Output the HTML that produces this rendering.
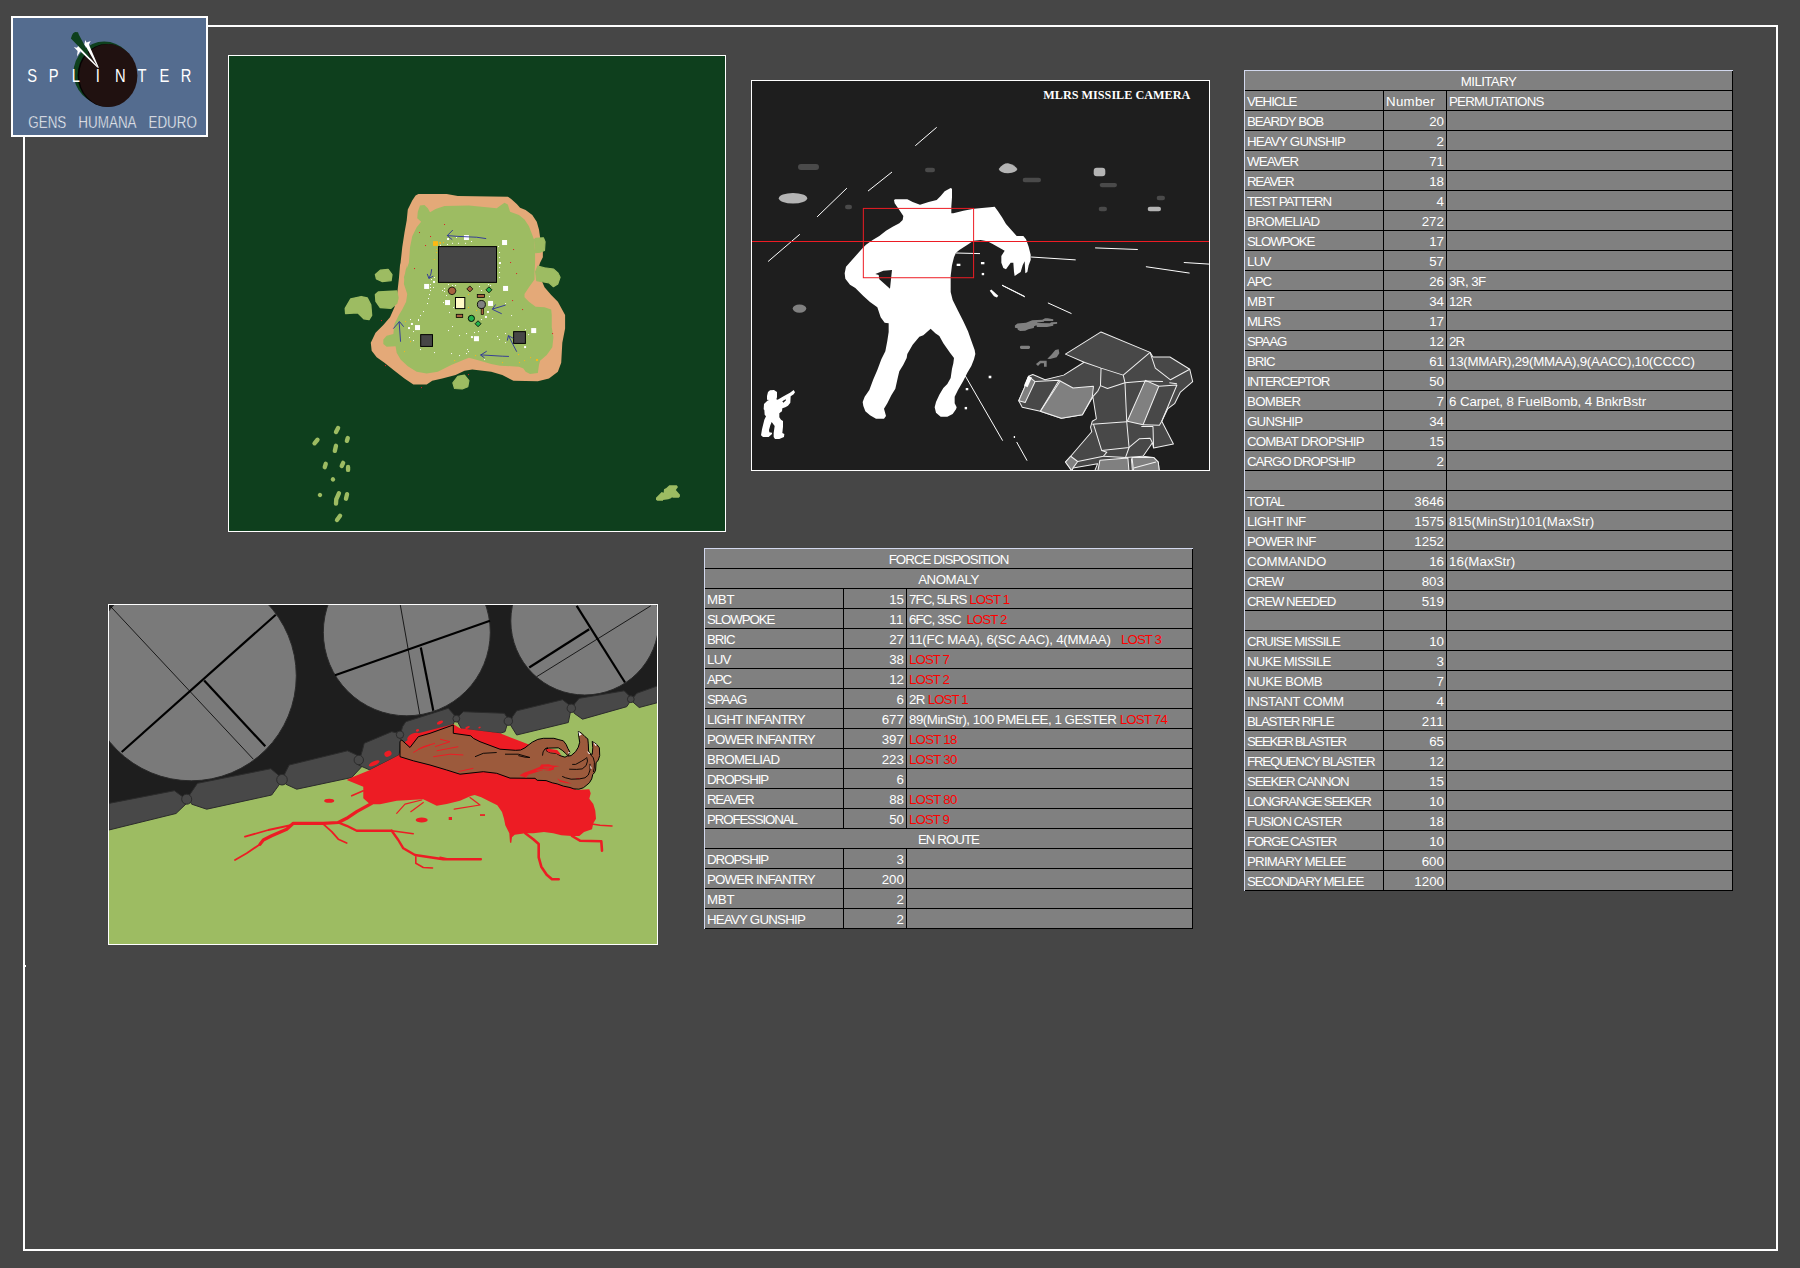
<!DOCTYPE html>
<html lang="en">
<head>
<meta charset="utf-8">
<title>SPLINTER - GENS HUMANA EDURO</title>
<style>
html,body{margin:0;padding:0;}
body{width:1800px;height:1268px;background:#464646;position:relative;overflow:hidden;font-family:"Liberation Sans",sans-serif;}
.abs{position:absolute;}
.frame{position:absolute;left:23px;top:25px;width:1751px;height:1222px;border:2px solid #fff;}
.tbl{position:absolute;width:488px;background:#808080;border-left:1px solid #d2d8ee;border-top:1px solid #d2d8ee;color:#fff;font-size:13.3px;line-height:21px;}
.tbl .r{height:19px;border-bottom:1px solid #000;display:flex;white-space:pre;overflow:hidden;}
.tbl .c1{width:136px;padding-left:2px;border-right:1px solid #000;overflow:hidden;}
.tbl .c2{width:60px;padding-right:2px;border-right:1px solid #000;text-align:right;overflow:hidden;}
.tbl .c2.l{text-align:left;padding-left:2px;padding-right:0;width:60px;}
.tbl .c3{width:283px;padding-left:2px;border-right:1px solid #000;overflow:hidden;}
.tbl .m{width:487px;border-right:1px solid #000;text-align:center;}
.tbl span.t{display:inline-block;position:relative;top:1px;}
.red{color:#ff0000;}
svg{position:absolute;display:block;}
</style>
</head>
<body>
<div class="frame"></div>
<div class="abs tick" style="left:25px;top:965px;width:1px;height:2px;background:#fff"></div>
<svg style="left:0;top:0" width="220" height="150" viewBox="0 0 220 150">
<rect x="12" y="17" width="195" height="119" fill="#546c8f" stroke="#fff" stroke-width="2"/>
<ellipse cx="104.2" cy="72.8" rx="30.7" ry="31.3" fill="#0e401d"/>
<ellipse cx="106.6" cy="75.4" rx="29" ry="31.4" fill="#050303"/>
<ellipse cx="108.3" cy="75.6" rx="29.1" ry="31.5" fill="#201110"/>
<polygon fill="#fff" points="78.4,45.8 81,48.2 90.5,58.4 98.9,67.8 97.3,67.6 80.3,51.3 77,56.6 77.6,51 73.8,47.1 76.9,47.7"/>
<polygon fill="#fff" points="85.3,40 86.6,42.6 90.7,41.1 88.9,44.6 98.9,67.8 97.6,67 86.3,47.2 84.2,45.1"/>
<polygon fill="#0e401d" points="70.9,38.4 72,35.3 73.1,33.3 75.1,32.1 78,32.2 78.9,34.7 84.4,45.1 91,59.2"/>
<g fill="#fff" font-family="'Liberation Sans',sans-serif">
<text transform="translate(0,81.8) scale(0.82,1)" font-size="18" text-anchor="middle" x="39.1 52.3 65.5 79.0 92.6 105.9 119.3 132.9 146.6 159.9 173.3 186.9 200.4 213.7 227" y="0" xml:space="preserve">S P L I N T E R</text>
<text font-size="17" stroke="#546c8f" stroke-width="0.45" y="127.8" x="28.3" textLength="38" lengthAdjust="spacingAndGlyphs">GENS</text>
<text font-size="17" stroke="#546c8f" stroke-width="0.45" y="127.8" x="78.3" textLength="58.3" lengthAdjust="spacingAndGlyphs">HUMANA</text>
<text font-size="17" stroke="#546c8f" stroke-width="0.45" y="127.8" x="148.5" textLength="48.4" lengthAdjust="spacingAndGlyphs">EDURO</text>
</g>
</svg>
<svg style="left:228px;top:54px" width="499" height="478" viewBox="228 54 499 478">
<rect x="228.5" y="55.5" width="497" height="476" fill="#0e3f1d" stroke="#fff" stroke-width="1"/>
<g transform="translate(380,185) scale(0.11117)">
<!-- sand -->
<polygon fill="#e4a978" points="180,720 185,700 200,560 220,430 240,320 250,220 290,140 320,95 345,82 600,82 700,100 1150,105 1180,125 1230,170 1260,205 1310,225 1370,270 1410,330 1430,400 1440,470 1465,600 1465,650 1440,700 1420,760 1450,850 1480,920 1540,990 1600,1050 1665,1170 1665,1290 1640,1420 1630,1600 1600,1680 1520,1740 1420,1765 1200,1760 1100,1710 1000,1680 830,1660 760,1670 680,1710 560,1740 470,1760 420,1795 300,1795 220,1740 130,1670 40,1600 -30,1550 -75,1490 -83,1420 -40,1330 30,1260 90,1190 130,1100 150,1020 170,840"/>
<!-- grass -->
<polygon fill="#9dbc62" points="240,720 235,950 215,830 230,780 260,700 270,560 290,460 330,380 370,330 335,300 340,240 360,185 400,180 430,210 450,245 500,215 580,190 800,185 1050,210 1090,180 1120,160 1150,175 1160,210 1170,240 1250,270 1300,310 1340,370 1370,450 1385,490 1395,600 1395,700 1390,790 1390,850 1340,920 1300,980 1300,1010 1340,1050 1400,1095 1480,1100 1540,1120 1545,1170 1545,1280 1560,1370 1550,1460 1500,1530 1440,1580 1430,1620 1420,1690 1350,1700 1310,1680 1290,1650 1250,1635 1080,1625 1000,1610 900,1580 800,1555 760,1570 640,1620 520,1680 420,1695 330,1680 250,1630 185,1570 150,1510 140,1450 60,1455 30,1430 30,1390 60,1355 120,1340 130,1250 170,1170 200,1120 235,1050 245,980 215,890 220,820"/>
<!-- blobs -->
<g fill="#9dbc62" stroke="#9dbc62" stroke-width="10" stroke-linejoin="round">
<polygon points="1390,490 1400,480 1470,475 1485,510 1480,590 1440,605 1400,610"/>
<polygon points="1420,730 1480,745 1560,755 1600,790 1620,830 1600,890 1560,915 1520,880 1460,870 1410,860 1400,780"/>
<polygon points="700,1720 760,1710 800,1760 790,1815 740,1835 670,1830 655,1780"/>
</g>
<!-- buildings -->
<rect x="526" y="554" width="522" height="322" fill="#464646" stroke="#000" stroke-width="9"/>
<rect x="366" y="1346" width="106" height="106" fill="#464646" stroke="#000" stroke-width="9"/>
<rect x="1202" y="1319" width="106" height="106" fill="#464646" stroke="#000" stroke-width="9"/>
<g fill="#fff">
<rect x="755" y="450" width="45" height="45"/><rect x="1098" y="495" width="45" height="45"/><rect x="397" y="890" width="45" height="45"/><rect x="1107" y="908" width="45" height="45"/><rect x="585" y="1035" width="45" height="45"/><rect x="972" y="1043" width="45" height="45"/><rect x="315" y="1260" width="45" height="45"/><rect x="845" y="1360" width="45" height="45"/><rect x="1360" y="1287" width="45" height="45"/>
<rect x="603" y="477" width="18" height="18"/><rect x="477" y="863" width="18" height="18"/><rect x="1070" y="693" width="18" height="18"/><rect x="962" y="1133" width="18" height="18"/><rect x="944" y="1178" width="18" height="18"/><rect x="278" y="1241" width="18" height="18"/><rect x="252" y="1278" width="18" height="18"/><rect x="818" y="1359" width="18" height="18"/><rect x="1296" y="1449" width="18" height="18"/>
</g>
<rect x="477" y="505" width="45" height="43" fill="#fdb913"/><rect x="532" y="513" width="17" height="16" fill="#fdb913"/><rect x="1403" y="1565" width="18" height="18" fill="#fdb913"/>
<!-- dots -->
<g fill="#fff">
<rect x="648" y="520" width="9" height="9"/><rect x="702" y="520" width="9" height="9"/><rect x="765" y="520" width="9" height="9"/><rect x="819" y="504" width="9" height="9"/><rect x="603" y="531" width="9" height="9"/><rect x="540" y="538" width="9" height="9"/><rect x="684" y="468" width="9" height="9"/>
<rect x="1062" y="549" width="9" height="9"/><rect x="1071" y="603" width="9" height="9"/><rect x="1071" y="648" width="9" height="9"/><rect x="1071" y="738" width="9" height="9"/><rect x="1071" y="783" width="9" height="9"/><rect x="1071" y="828" width="9" height="9"/>
<rect x="486" y="828" width="9" height="9"/><rect x="459" y="846" width="9" height="9"/><rect x="450" y="891" width="9" height="9"/><rect x="450" y="918" width="9" height="9"/><rect x="477" y="918" width="9" height="9"/><rect x="450" y="945" width="9" height="9"/><rect x="441" y="981" width="9" height="9"/><rect x="432" y="1017" width="9" height="9"/><rect x="423" y="1062" width="9" height="9"/><rect x="387" y="1134" width="9" height="9"/><rect x="360" y="1170" width="9" height="9"/><rect x="342" y="1206" width="9" height="18"/><rect x="270" y="1206" width="9" height="9"/>
<rect x="612" y="891" width="9" height="9"/><rect x="648" y="900" width="9" height="9"/><rect x="675" y="900" width="9" height="9"/><rect x="576" y="927" width="9" height="9"/><rect x="558" y="945" width="9" height="9"/><rect x="576" y="954" width="9" height="9"/><rect x="594" y="990" width="9" height="9"/><rect x="567" y="1053" width="9" height="9"/><rect x="657" y="1098" width="9" height="9"/><rect x="621" y="1143" width="9" height="9"/>
<rect x="891" y="909" width="9" height="9"/><rect x="972" y="891" width="9" height="9"/><rect x="990" y="900" width="9" height="9"/><rect x="909" y="945" width="9" height="9"/><rect x="981" y="999" width="9" height="9"/><rect x="1125" y="1062" width="9" height="9"/><rect x="1179" y="1170" width="9" height="9"/><rect x="1008" y="1197" width="9" height="9"/><rect x="909" y="1206" width="9" height="9"/>
<rect x="648" y="1269" width="9" height="9"/><rect x="612" y="1305" width="9" height="9"/><rect x="711" y="1350" width="9" height="9"/><rect x="774" y="1332" width="9" height="9"/><rect x="846" y="1323" width="9" height="9"/><rect x="882" y="1314" width="9" height="9"/><rect x="954" y="1314" width="9" height="9"/><rect x="1242" y="1269" width="9" height="9"/><rect x="1305" y="1296" width="9" height="9"/><rect x="1332" y="1341" width="9" height="9"/><rect x="1125" y="1332" width="9" height="9"/><rect x="1053" y="1359" width="9" height="9"/><rect x="1071" y="1386" width="9" height="9"/><rect x="1125" y="1413" width="9" height="9"/>
<rect x="261" y="1368" width="9" height="9"/><rect x="297" y="1395" width="9" height="9"/><rect x="297" y="1314" width="9" height="9"/><rect x="360" y="1476" width="9" height="9"/><rect x="486" y="1503" width="9" height="9"/><rect x="639" y="1512" width="9" height="9"/><rect x="711" y="1530" width="9" height="9"/><rect x="774" y="1512" width="9" height="9"/><rect x="792" y="1494" width="9" height="9"/><rect x="783" y="1476" width="9" height="9"/><rect x="936" y="1566" width="9" height="9"/>
</g>
<g fill="#fdb913">
<rect x="567" y="513" width="9" height="9"/><rect x="504" y="576" width="9" height="9"/><rect x="504" y="603" width="9" height="9"/><rect x="486" y="666" width="9" height="9"/><rect x="792" y="981" width="9" height="9"/><rect x="792" y="1098" width="9" height="9"/><rect x="864" y="1125" width="9" height="9"/><rect x="225" y="1224" width="9" height="9"/><rect x="270" y="1404" width="9" height="9"/><rect x="216" y="1494" width="9" height="9"/><rect x="666" y="1575" width="9" height="9"/><rect x="855" y="1530" width="9" height="9"/><rect x="1098" y="1593" width="9" height="9"/><rect x="1251" y="1593" width="9" height="9"/><rect x="1296" y="1575" width="9" height="9"/><rect x="1350" y="1548" width="9" height="9"/><rect x="1242" y="1521" width="9" height="9"/>
</g>
<g fill="#e01b24">
<rect x="576" y="351" width="9" height="9"/><rect x="351" y="423" width="9" height="9"/><rect x="450" y="459" width="9" height="9"/><rect x="405" y="540" width="9" height="9"/><rect x="306" y="747" width="9" height="9"/><rect x="1197" y="576" width="9" height="9"/><rect x="1170" y="693" width="9" height="9"/><rect x="1224" y="792" width="9" height="9"/><rect x="1188" y="1035" width="9" height="9"/><rect x="1278" y="1116" width="9" height="9"/><rect x="1548" y="1332" width="9" height="9"/><rect x="9" y="1215" width="9" height="9"/><rect x="45" y="1620" width="9" height="9"/><rect x="369" y="1818" width="9" height="9"/><rect x="792" y="1701" width="9" height="9"/>
</g>
<!-- markers -->
<polygon points="648,917 673,927 683,952 673,977 648,987 623,977 613,952 623,927" fill="#a5623f" stroke="#000" stroke-width="7"/>
<polygon points="808,908 835,935 808,962 781,935" fill="#a5623f" stroke="#000" stroke-width="7"/>
<polygon points="980,916 1007,943 980,970 953,943" fill="#22b14c" stroke="#000" stroke-width="7"/>
<rect x="875" y="985" width="65" height="27" fill="#a5623f" stroke="#000" stroke-width="7"/>
<rect x="686" y="1163" width="58" height="29" fill="#a5623f" stroke="#000" stroke-width="7"/>
<rect x="679" y="1012" width="84" height="100" fill="#fffbc6" stroke="#000" stroke-width="9"/>
<rect x="910" y="1105" width="22" height="60" fill="#a5623f" stroke="#000" stroke-width="6"/>
<circle cx="912" cy="1075" r="36" fill="#808080" stroke="#000" stroke-width="8"/>
<circle cx="822" cy="1200" r="28" fill="#22b14c" stroke="#000" stroke-width="8"/>
<polygon points="882,1221 909,1248 882,1275 855,1248" fill="#22b14c" stroke="#000" stroke-width="7"/>
<!-- arrows -->
<g fill="none" stroke="#2a2e9c" stroke-width="8">
<polyline points="955,482 870,470 700,462 605,455"/><polyline points="655,405 605,455 650,492"/>
<polyline points="465,757 458,800 440,840"/><polyline points="425,800 440,840 480,820"/>
<polyline points="1130,1080 1015,1115"/><polyline points="1040,1075 1010,1118 1095,1158"/>
<polyline points="185,1410 172,1230"/><polyline points="120,1292 175,1228 213,1275"/>
<polyline points="1160,1542 1100,1540 905,1528"/><polyline points="960,1495 905,1530 940,1555"/>
<polyline points="1230,1500 1155,1355"/><polyline points="1145,1400 1155,1355 1200,1380"/>
</g>
</g>
<!-- left blobs (from 5.765x zoom, offset 330,180) -->
<g transform="translate(330,180) scale(0.17346)" fill="#9dbc62" stroke="#9dbc62" stroke-width="8" stroke-linejoin="round">
<polygon points="262,545 290,520 335,515 357,545 352,580 300,585 268,570"/>
<polygon points="262,660 280,645 385,640 392,680 385,710 350,740 290,735 265,700"/>
<polygon points="88,740 120,685 180,672 215,680 235,720 240,780 225,805 195,800 160,765 90,770"/>
</g>
<!-- archipelago (11.03x zoom, offset 300,415) -->
<g transform="translate(300,415) scale(0.09067)" stroke="#9dbc62" stroke-linecap="round" fill="none" stroke-width="48">
<line x1="397" y1="188" x2="420" y2="143"/><line x1="160" y1="312" x2="193" y2="273"/><line x1="517" y1="285" x2="527" y2="254"/><line x1="384" y1="396" x2="397" y2="340"/>
<line x1="273" y1="576" x2="284" y2="538"/><line x1="460" y1="562" x2="476" y2="528"/><line x1="530" y1="606" x2="530" y2="573"/>
<line x1="363" y1="710" x2="364" y2="711"/><line x1="220" y1="882" x2="221" y2="883"/>
<polyline points="397,978 400,930 430,862"/><line x1="507" y1="923" x2="519" y2="873"/><line x1="408" y1="1158" x2="442" y2="1112"/>
</g>
<g transform="translate(640,470) scale(0.033333)" fill="#9dbc62">
<polygon points="480,830 650,660 710,680 720,580 790,540 880,455 1100,455 1140,510 1075,600 1200,740 1195,800 1160,835 990,830 960,815 930,850 850,875 690,900 690,925 520,925 480,890"/>
</g>
</svg>
<svg style="left:751px;top:80px" width="460" height="392" viewBox="751 80 460 392">
<rect x="751.5" y="80.5" width="458" height="390" fill="#1e1e1e" stroke="#fff" stroke-width="1"/>
<clipPath id="camclip"><rect x="752" y="81" width="457" height="389"/></clipPath>
<g clip-path="url(#camclip)">
<!-- grey blobs -->
<g fill="#4a4a4a">
<rect x="798" y="164" width="21" height="6" rx="3"/><rect x="925" y="167.7" width="10" height="4.6" rx="2.3"/><rect x="845" y="204.7" width="7" height="4.6" rx="2.3"/>
<rect x="1022.7" y="177.7" width="18.3" height="4.6" rx="2.3"/><rect x="1099.7" y="183" width="17.3" height="4.2" rx="2.1"/><rect x="1156.7" y="195.7" width="8.3" height="4.6" rx="2.3"/><rect x="1098.7" y="206.7" width="8.3" height="4.6" rx="2.3"/>
</g>
<g fill="#b4b4b4">
<ellipse cx="793" cy="198.3" rx="14.2" ry="5.2"/>
<path d="M998.7,169 Q1003,163 1008,163.2 Q1015,165 1017.3,169 Q1017,172.5 1008,173.3 Q1000,173 998.7,169Z"/>
<rect x="1093.7" y="167.7" width="11.6" height="8.6" rx="3"/>
<rect x="1147.7" y="206.7" width="13.3" height="4.6" rx="2.3"/>
</g>
<ellipse cx="799.5" cy="308.6" rx="6.8" ry="4.2" fill="#808080"/>
<!-- streaks -->
<g stroke="#fff" stroke-width="1" fill="none">
<line x1="915.3" y1="145.7" x2="936.7" y2="127.3"/><line x1="868" y1="191.1" x2="892" y2="172"/><line x1="817.1" y1="216.9" x2="846.9" y2="188.1"/><line x1="768.1" y1="261.5" x2="799.8" y2="234.3"/>
<line x1="1095.1" y1="247.9" x2="1137.8" y2="249.5"/><line x1="1031.1" y1="257" x2="1075.7" y2="259.9"/><line x1="1145.9" y1="266.7" x2="1189.6" y2="273.1"/><line x1="1183.8" y1="262.5" x2="1209" y2="264.1"/>
<line x1="1002" y1="285.1" x2="1024.6" y2="296.4"/><line x1="1047.9" y1="302.9" x2="1071.5" y2="313.6"/><line x1="956" y1="253" x2="980" y2="253.6"/>
</g>
<!-- monster (7.5x zoom, offset 830,180) -->
<g transform="translate(830,180) scale(0.133333)">
<path fill="#fff" fill-rule="evenodd" d="M480,150 L490,145 580,145 620,165 675,185 740,165 800,150 830,120 860,85 905,60 915,65 915,130 910,200 910,250 925,250 1000,230 1080,215 1200,205 1235,200 1260,235 1290,280 1320,330 1360,375 1400,420 1450,420 1470,445 1490,500 1505,560 1505,600 1490,640 1480,690 1465,700 1460,610 1445,640 1430,690 1385,720 1380,690 1375,620 1355,620 1320,670 1300,660 1285,620 1285,570 1310,530 1290,520 1220,480 1180,460 1130,450 1075,455 1040,480 970,525 945,545 930,580 915,640 905,720 905,840 920,900 960,980 1000,1060 1035,1135 1060,1205 1085,1275 1090,1305 1080,1345 1060,1395 1030,1445 1000,1505 960,1575 935,1625 935,1675 950,1705 945,1720 920,1755 880,1775 830,1775 795,1745 785,1705 795,1665 820,1610 850,1560 880,1530 905,1485 915,1415 925,1375 930,1335 900,1295 850,1225 820,1170 790,1150 755,1115 700,1165 670,1175 620,1235 580,1305 575,1335 550,1385 520,1435 510,1475 490,1565 460,1615 430,1675 405,1715 420,1770 405,1790 345,1790 300,1765 265,1735 250,1695 245,1665 260,1625 295,1575 325,1495 355,1425 385,1345 415,1285 430,1205 440,1140 440,1075 410,1070 380,1030 355,955 300,915 250,870 190,810 150,785 115,740 110,700 120,650 160,605 200,560 240,515 270,485 320,450 370,420 420,380 470,350 520,325 545,300 550,270 520,225 485,175Z M340,705 L400,680 465,675 460,720 450,815 370,745 365,712Z"/>
<g fill="#fff"><rect x="950" y="628" width="28" height="17"/><rect x="1132" y="615" width="26" height="17"/><rect x="1138" y="697" width="18" height="17"/>
<polygon points="1198,830 1210,822 1262,868 1252,882 1230,872"/>
<rect x="1190" y="1468" width="20" height="19"/><rect x="1018" y="1560" width="19" height="17"/><rect x="1010" y="1702" width="18" height="18"/><rect x="1378" y="1920" width="10" height="15"/></g>
<g stroke="#fff" stroke-width="7.5" fill="none"><line x1="1290" y1="790" x2="1462" y2="877"/><line x1="1015" y1="1470" x2="1295" y2="1955"/><line x1="1400" y1="1965" x2="1478" y2="2105"/></g>
<!-- mid grey blobs -->
<g fill="#808080">
<rect x="1425" y="1243" width="75" height="24" rx="10"/>
<path d="M1630,1340 L1660,1310 1690,1275 1715,1270 1720,1300 1700,1330 1650,1342Z"/>
<path d="M1545,1380 L1575,1355 1625,1355 1625,1400 1605,1400 1605,1375 1580,1375 1560,1395Z"/></g>
<!-- targeting -->
<rect x="250" y="213" width="827" height="520" fill="none" stroke="#ed1c24" stroke-width="7.5"/>
</g>
<g transform="translate(1005,310) scale(0.038889)" fill="#808080"><polygon points="255,400 320,345 540,330 700,265 960,250 1030,215 1100,215 1240,235 1240,280 1010,285 1000,305 830,320 830,335 1150,340 1190,315 1340,310 1340,355 1240,365 1240,405 1080,435 820,435 810,395 750,420 740,460 600,495 520,535 390,540 330,510 320,470 255,455"/></g>
<line x1="752" y1="241.5" x2="1209" y2="241.5" stroke="#ed1c24" stroke-width="1"/>
<!-- soldier (15x zoom, offset 752,380) -->
<g transform="translate(752,380) scale(0.066667)">
<path fill="#fff" fill-rule="evenodd" d="M240,180 L270,155 330,150 375,180 375,260 365,290 385,295 480,240 570,190 625,150 645,185 625,215 580,245 575,340 540,385 500,410 455,425 450,470 410,500 410,560 435,595 465,615 465,700 455,795 485,810 480,855 410,885 345,885 325,855 325,795 340,690 295,630 275,680 255,750 260,785 300,790 300,810 250,855 165,855 135,830 150,740 185,595 210,545 190,520 185,450 175,440 180,360 230,310 255,300 225,295 225,240Z M455,320 L505,290 510,305 470,340Z"/>
</g>
<!-- mech (8.567x zoom, offset 1010,322) -->
<g transform="translate(1010,322) scale(0.11673)" stroke="#f0f0f0" stroke-width="8.6" stroke-linejoin="round">
<polygon fill="#484848" points="780,85 1200,260 1225,300 1370,300 1540,405 1565,510 1460,600 1410,700 1350,745 1300,850 1400,1045 1230,1080 1220,1035 1140,1150 1230,1160 1270,1200 1280,1290 720,1290 750,1215 540,1250 530,1275 475,1200 520,1150 700,940 690,900 705,850 740,830 710,640 620,795 440,825 260,765 105,730 75,675 125,560 160,465 195,450 300,495 460,455 635,345 475,275"/>
<polygon fill="#808080" points="430,505 540,565 715,550 705,640 620,795 440,825 260,765"/>
<polygon fill="#808080" points="160,465 215,510 130,690 75,675 125,560"/>
<polygon fill="#fff" stroke="none" points="155,462 188,476 150,560 120,545"/>
<polygon fill="#808080" points="1160,500 1275,550 1140,880 1005,850"/>
<polygon fill="#808080" points="770,1185 1010,1165 1020,1290 750,1290"/>
<polygon fill="#808080" points="1045,1160 1230,1160 1270,1200 1280,1290 1060,1290"/>
<polygon fill="#808080" points="475,1200 520,1150 580,1195 540,1250 530,1275"/>
<g fill="none">
<polyline points="635,345 780,395 970,455 1200,260"/>
<polyline points="780,395 775,545 835,570 985,520"/>
<polyline points="970,455 985,520 1000,855 1020,1075 990,1160"/>
<polyline points="985,520 1160,505 1310,510"/>
<polyline points="1275,550 1430,540 1300,850"/>
<polyline points="1140,880 1280,885 1300,850"/>
<polyline points="1365,520 1430,530"/>
<polyline points="1200,260 1245,395 1375,495 1540,405"/>
<polyline points="705,875 1000,855"/>
<polyline points="715,875 785,1100 1020,1075 1110,1000 1200,995 1220,1035"/>
<polyline points="1125,895 1225,895 1230,1080"/>
<polyline points="785,1100 830,1115 800,1150 580,1195"/>
<polyline points="800,1150 990,1160 1140,1150"/>
<polyline points="215,510 420,500 430,505"/>
<polyline points="420,500 260,765"/>
<polyline points="750,595 710,640"/>
<polyline points="775,545 750,595"/>
<polyline points="1050,1290 1040,1170"/>
<polyline points="1060,1250 1250,1200"/>
</g>
</g>
</g>
<text x="1043.3" y="98.9" font-family="'Liberation Serif',serif" font-weight="bold" font-size="12.2" fill="#fff" textLength="147" lengthAdjust="spacingAndGlyphs">MLRS MISSILE CAMERA</text>
</svg>
<svg style="left:108px;top:604px" width="550" height="341" viewBox="108 604 550 341">
<clipPath id="goreclip"><rect x="109" y="605" width="548" height="339"/></clipPath>
<rect x="108.5" y="604.5" width="549" height="340" fill="#9dbc62" stroke="#fff" stroke-width="1"/>
<g clip-path="url(#goreclip)">
<polygon fill="#1e1e1e" points="108,604 658,604 658,693 630.8,699.2 571.3,708.3 508.3,721.2 456.3,718.7 400,734.7 358.8,760 282,779.7 186.7,799.2 108,817"/>
<g fill="#7a7a7a" stroke="#2a2a2a" stroke-width="1">
<circle cx="191.3" cy="675.8" r="105"/><circle cx="406.8" cy="632.3" r="83.5"/><circle cx="584.8" cy="621" r="74"/></g>
<g stroke="#000" fill="none">
<line x1="121.7" y1="752" x2="275.8" y2="614.7" stroke-width="2.2"/>
<line x1="110.8" y1="606.7" x2="253.3" y2="759.2" stroke-width="0.8"/>
<line x1="204.2" y1="680.5" x2="265.3" y2="746.3" stroke-width="2.2"/>
<line x1="335" y1="675.3" x2="490" y2="620.8" stroke-width="2.2"/>
<line x1="420.8" y1="647.5" x2="433.3" y2="710.8" stroke-width="2.2"/>
<line x1="400.3" y1="605" x2="419.7" y2="714.2" stroke-width="0.8"/>
<line x1="576.7" y1="605.8" x2="625" y2="682.5" stroke-width="2.2"/>
<line x1="529.2" y1="667.5" x2="589.2" y2="629.2" stroke-width="2.2"/>
<line x1="536.7" y1="676.7" x2="650.8" y2="605.8" stroke-width="0.8"/>
</g>
<g fill="#484848" stroke="#2c2c2c" stroke-width="1" stroke-linejoin="round">
<polygon points="108.9,803.4 174.4,790.7 183.9,797.7 187,803 176,813.5 108.9,830"/>
<polygon points="197.5,783.3 270.8,768.7 278.3,775 280.8,782.5 271.7,795 206.7,809.2 191.7,804.2 188.3,798.3 190,794.2"/>
<polygon points="289.2,765 347.5,750.8 356.7,755 361.7,766.7 351.7,777.5 296.7,789.2 285.8,784.2 283.3,779.2 285,773.3"/>
<polygon points="364.2,743.3 391.7,731.7 398.3,733.3 400.8,738.3 399.2,755 370,770 358.3,765 360,758.3 362.5,750"/>
<polygon points="405.8,721.7 448.3,708.3 454.2,715 455,720 451.7,728.3 410,748.3 400,738.3 400.8,733.3 402.5,726.7"/>
<polygon points="463.3,711.7 504.2,713.3 506.7,716.7 507.5,723.3 505,731.7 500,733.3 461.7,729.2 457.5,721.7 458.3,716.7"/>
<polygon points="516.7,710.8 562.5,699.7 568.3,704.2 570.8,710 568.3,722.5 516.7,735 510,724.2 512.5,716.7"/>
<polygon points="579.2,698.3 624.2,690.8 629.2,695.8 630,701.7 626.7,706.7 582.5,719.2 574.2,713.3 572.5,708.3 575,703.3"/>
<polygon points="636.7,693.3 660,685 660,702 639.2,707.5 632.5,701.7 633.3,697.5"/>
<circle cx="186.7" cy="799.2" r="5"/>
<circle cx="282" cy="779.7" r="5.3"/>
<circle cx="358.8" cy="760" r="4.7"/>
<circle cx="400" cy="734.7" r="3.7"/>
<circle cx="456.3" cy="718.7" r="3.4"/>
<circle cx="508.3" cy="721.2" r="4.2"/>
<circle cx="571.3" cy="708.3" r="4.2"/>
<circle cx="630.8" cy="699.2" r="3.4"/>
</g>
<polygon fill="#ed1c24" points="346.7,780 351.7,777.5 370,770 399.2,755 398.3,756.7 405,741.7 418.3,733.3 453.3,724.2 460,728.3 500,733.3 521.7,741.7 530,745 576.7,790 589.3,789.3 590.7,793.3 589.3,798.7 593.3,804 595.3,810.7 596,818.7 593.3,823.3 592,829.3 584,832 579.3,836 572,836 561.3,835.3 553.3,833.3 544,832 533.3,833.3 525.3,833.3 514.7,834.7 512,837.3 511.3,842.7 510,842.7 509.3,833.3 505.3,825.3 504,818.7 502,812 497.3,805.3 490.7,802 481.3,797.3 474.7,794.9 470.7,796 460,800.7 446.7,804 436.7,805.8 423.3,799.2 396.7,800.8 380,804.2 370,804.2 363.3,798.3 363.3,786.7"/>
<g fill="none" stroke="#ed1c24" stroke-linejoin="round" stroke-linecap="round">
<polyline points="371.7,803.3 356.7,811.7 346.7,818.3 338.3,822.5 323.3,823.3 293.3,823.3 286.7,829.2 271.7,835.8 263.3,840 260,844.2" stroke-width="3.2"/>
<polyline points="260,844.2 246.7,853.3 235,860" stroke-width="1.8"/>
<polyline points="291.7,825 268.3,830 245,836.7" stroke-width="1.8"/>
<polyline points="323.3,824.2 331.7,831.7 338.3,839.2 346.7,843" stroke-width="1.8"/>
<polyline points="338.3,822.5 346.7,825.8 356.7,830.8 391.7,830.8" stroke-width="2.4"/>
<polyline points="391.7,830.8 413.3,833.7" stroke-width="1.4"/>
<polyline points="391.7,830.8 398.3,840 403.3,848.3 415,855 443.3,859.2 466.7,859.2 480.8,859.2" stroke-width="2.4"/>
<polyline points="415.8,856.7 415.8,863.3 423.3,867.5 432.5,868" stroke-width="1.6"/>
<polyline points="351.7,795.8 363.3,790.8" stroke-width="1.6"/>
<polyline points="396.7,813.3 405,804.2 421.7,800" stroke-width="1.2"/>
<polyline points="410.8,811.7 423.3,802.5" stroke-width="1.2"/>
<polyline points="454.2,809.2 480,805 470,797.5" stroke-width="1.2"/>
<polyline points="525.3,833.3 533.3,839.3 538.7,844 538.7,857.3 541.3,866.7 546.7,874.7 552,879.3 558.7,879.3" stroke-width="2.6"/>
<polyline points="572,836 580,840.7 601.3,841.3 602,850.7" stroke-width="2.6"/>
<polyline points="592,824 600,825.3 612,826" stroke-width="1.5"/>
<polyline points="440,857.3 449.3,859.3 465.3,859.3 480.7,858.7" stroke-width="1.5"/>
</g>
<g fill="#ed1c24">
<ellipse cx="329.2" cy="800.8" rx="5" ry="2"/>
<ellipse cx="421.7" cy="820" rx="6" ry="2.6"/>
<rect x="448.7" y="817" width="3.3" height="3"/>
<rect x="480" y="814.2" width="5" height="1.7"/>
<ellipse cx="387.95" cy="753.75" rx="3.75" ry="2.84375" transform="rotate(-25 387.95 753.75)"/>
<ellipse cx="374.15" cy="763.35" rx="5.85" ry="2.09375" transform="rotate(-25 374.15 763.35)"/>
<ellipse cx="413.35" cy="736.7" rx="6.65" ry="3.125" transform="rotate(-25 413.35 736.7)"/>
<ellipse cx="440" cy="722.5" rx="3.3" ry="1.5625" transform="rotate(-25 440 722.5)"/>
<ellipse cx="467.5" cy="727.5" rx="2.5" ry="1.0625" transform="rotate(-25 467.5 727.5)"/>
<ellipse cx="479.55" cy="727.5" rx="1.25" ry="0.75" transform="rotate(-25 479.55 727.5)"/>
<ellipse cx="417.5" cy="730.4" rx="1.7" ry="1.3125" transform="rotate(-25 417.5 730.4)"/>
</g>
<polygon fill="#9c5a3c" stroke="#000" stroke-width="1" stroke-linejoin="round" points="400,741.7 401.7,740 410,747.5 418.3,736.7 430,733.3 453.3,725 453.3,733.3 470.8,735.8 473.3,738.3 480,741.7 500,749.2 515.6,750.3 520.6,750 525,747.8 528.9,744.7 532.2,742.2 537.8,739.4 543.3,738.3 553.9,738.3 558.9,739.7 563.3,740.8 566.1,744.4 567.8,748.3 569.9,752.1 568.9,754.2 567.8,756.1 571.1,755.6 575.6,751.7 578.3,747.2 579.7,742.2 578.9,737.2 578.3,731.4 581.7,733.3 585,736.7 587.8,738.9 588.3,743.9 588.6,751.1 590.6,753.9 592.2,754.4 592.8,747.8 592.2,741.4 596.7,744.4 599.4,747.8 599.7,755.6 598.3,760 596.1,762.8 595.6,770 594.4,772.8 592.8,774.4 591.7,778.9 589.4,782.8 586.1,785.6 583.3,787.8 578.9,789.2 573.9,788.9 570,787.5 563.3,786.1 557.2,783.9 552.2,782.8 546.1,780.6 537.2,780.3 535,778.3 510,778.1 496.7,773.3 483.3,771.7 460,774.2 446.7,770 430,765 413.3,760.8 400,756.7"/>
<polygon fill="#9dbc62" stroke="#000" stroke-width="1" stroke-linejoin="round" points="546.1,748.9 548.9,748.1 558.3,747.8 562.2,750.3 565.6,753.3 567.8,755.6 565,757.2 560,755.6 556.1,753.3 550.6,752.8 546.7,751.1"/>
<polygon fill="#ed1c24" points="546.4,749.3 548.9,748.7 557.2,750 560,753.3 560.8,754.9 557.8,754.3 554.4,752.8 548.9,752.2 546.6,750.8"/>
<g fill="#ed1c24">
<polygon points="541.1,764.4 548.9,764.2 552.2,765.6 560,766.1 553.9,767.2 553.9,769.4 550,770.8 543.3,770 536.1,772.2 526.7,776.1 526.7,777.8 519.4,775.6 523.9,772.8 533.3,769.4 540,766.7"/>
<polygon points="557.2,778.3 560,780 566.1,781.7 571.7,783.6 566.7,783.3 560,781.7"/>
<polygon points="576.1,778.1 580,778.1 580,779 576.1,779"/>
</g>
<g fill="none" stroke="#9c5a3c" stroke-width="0.8">
<polyline points="543.3,767.2 552.2,767.2" stroke-width="0.8"/>
<polyline points="536.7,770.3 548.9,768.9" stroke-width="0.8"/>
<polyline points="528.3,774.7 536.7,773.3" stroke-width="0.8"/>
</g>
<g fill="none" stroke="#000" stroke-width="0.9" stroke-linejoin="round">
<polyline points="475,756.7 483.3,753.3 496.7,752.5" stroke-width="0.9"/>
<polyline points="505,754.2 518.3,754.2 530,757.5" stroke-width="0.9"/>
<polyline points="542.5,755.6 543.1,751.9 545,748.9 547.8,747.5" stroke-width="0.9"/>
<polyline points="572.2,764.4 575.6,764.4 581.7,761.1 586.1,758.3" stroke-width="0.9"/>
<polyline points="569.2,769.2 576.7,769.4 582.2,768.9 586.1,765.6 587.5,761.1 586.7,757.2" stroke-width="0.9"/>
<polyline points="562.2,776.4 565.6,777.8 571.1,779.2 579.4,778.9 585,777.8 588.3,775 590,770 590,763.9" stroke-width="0.9"/>
<polyline points="518.3,755.6 525,757.2 529.7,757.5" stroke-width="0.9"/>
<polyline points="590,753.9 593.3,757.8 594.4,762.2 594.2,768.3 593.3,772.2" stroke-width="0.9"/>
</g>
<g fill="none" stroke="#ed1c24" stroke-width="1">
<polyline points="413.3,752.5 423.3,746.7 435,743.3" stroke-width="1"/>
<polyline points="418.3,749.2 430,745" stroke-width="1"/>
<polyline points="435,746.7 450,741.7 440,739.2" stroke-width="1"/>
<polyline points="436.7,750.8 458.3,746.7" stroke-width="1"/>
<polyline points="433.3,756.7 450,754.2 463.3,755" stroke-width="1"/>
<polyline points="458.3,771.7 473.3,768.3" stroke-width="1"/>
</g>
<g fill="#fff">
<polygon points="578.4,731.6 581.9,734.6 579.3,736.1"/>
<polygon points="593.3,742.2 596.8,745.1 595.4,746"/>
<polygon points="586.9,751 590.3,753.6 588.8,754"/>
<polygon points="589.8,765 591.9,768.3 590.8,768.9"/>
<polygon points="568.1,752.1 570,752.2 568.8,754"/>
</g>
</g>
</svg>
<div class="tbl" id="force" style="left:704px;top:548px">
<div class="r"><div class="m"><span style="letter-spacing:-0.96px">FORCE DISPOSITION</span></div></div>
<div class="r"><div class="m"><span style="letter-spacing:-0.47px">ANOMALY</span></div></div>
<div class="r"><div class="c1"><span style="letter-spacing:-0.26px">MBT</span></div><div class="c2"><span style="letter-spacing:0.03px">15</span></div><div class="c3"><span style="letter-spacing:-0.93px">7FC, 5LRS </span><span class="red" style="letter-spacing:-0.92px">LOST 1</span></div></div>
<div class="r"><div class="c1"><span style="letter-spacing:-1.11px">SLOWPOKE</span></div><div class="c2"><span style="letter-spacing:0.52px">11</span></div><div class="c3"><span style="letter-spacing:-0.84px">6FC, 3SC  </span><span class="red" style="letter-spacing:-0.92px">LOST 2</span></div></div>
<div class="r"><div class="c1"><span style="letter-spacing:-1.08px">BRIC</span></div><div class="c2"><span style="letter-spacing:0.03px">27</span></div><div class="c3"><span style="letter-spacing:-0.24px">11(FC MAA), 6(SC AAC), 4(MMAA)   </span><span class="red" style="letter-spacing:-0.92px">LOST 3</span></div></div>
<div class="r"><div class="c1"><span style="letter-spacing:-0.77px">LUV</span></div><div class="c2"><span style="letter-spacing:0.03px">38</span></div><div class="c3"><span class="red" style="letter-spacing:-0.92px">LOST 7</span></div></div>
<div class="r"><div class="c1"><span style="letter-spacing:-1.16px">APC</span></div><div class="c2"><span style="letter-spacing:0.03px">12</span></div><div class="c3"><span class="red" style="letter-spacing:-0.92px">LOST 2</span></div></div>
<div class="r"><div class="c1"><span style="letter-spacing:-1.1px">SPAAG</span></div><div class="c2"><span style="letter-spacing:0.03px">6</span></div><div class="c3"><span style="letter-spacing:-0.67px">2R </span><span class="red" style="letter-spacing:-0.92px">LOST 1</span></div></div>
<div class="r"><div class="c1"><span style="letter-spacing:-0.74px">LIGHT INFANTRY</span></div><div class="c2"><span style="letter-spacing:0.04px">677</span></div><div class="c3"><span style="letter-spacing:-0.47px">89(MinStr), 100 PMELEE, 1 GESTER </span><span class="red" style="letter-spacing:-0.78px">LOST 74</span></div></div>
<div class="r"><div class="c1"><span style="letter-spacing:-0.84px">POWER INFANTRY</span></div><div class="c2"><span style="letter-spacing:0.04px">397</span></div><div class="c3"><span class="red" style="letter-spacing:-0.78px">LOST 18</span></div></div>
<div class="r"><div class="c1"><span style="letter-spacing:-0.64px">BROMELIAD</span></div><div class="c2"><span style="letter-spacing:0.04px">223</span></div><div class="c3"><span class="red" style="letter-spacing:-0.78px">LOST 30</span></div></div>
<div class="r"><div class="c1"><span style="letter-spacing:-1.03px">DROPSHIP</span></div><div class="c2"><span style="letter-spacing:0.03px">6</span></div><div class="c3"></div></div>
<div class="r"><div class="c1"><span style="letter-spacing:-1.24px">REAVER</span></div><div class="c2"><span style="letter-spacing:0.03px">88</span></div><div class="c3"><span class="red" style="letter-spacing:-0.78px">LOST 80</span></div></div>
<div class="r"><div class="c1"><span style="letter-spacing:-1.14px">PROFESSIONAL</span></div><div class="c2"><span style="letter-spacing:0.03px">50</span></div><div class="c3"><span class="red" style="letter-spacing:-0.92px">LOST 9</span></div></div>
<div class="r"><div class="m"><span style="letter-spacing:-0.95px">EN ROUTE</span></div></div>
<div class="r"><div class="c1"><span style="letter-spacing:-1.03px">DROPSHIP</span></div><div class="c2"><span style="letter-spacing:0.03px">3</span></div><div class="c3"></div></div>
<div class="r"><div class="c1"><span style="letter-spacing:-0.84px">POWER INFANTRY</span></div><div class="c2"><span style="letter-spacing:0.04px">200</span></div><div class="c3"></div></div>
<div class="r"><div class="c1"><span style="letter-spacing:-0.26px">MBT</span></div><div class="c2"><span style="letter-spacing:0.03px">2</span></div><div class="c3"></div></div>
<div class="r"><div class="c1"><span style="letter-spacing:-0.78px">HEAVY GUNSHIP</span></div><div class="c2"><span style="letter-spacing:0.03px">2</span></div><div class="c3"></div></div>
</div>
<div class="tbl" id="military" style="left:1244px;top:70px">
<div class="r"><div class="m"><span style="letter-spacing:-0.58px">MILITARY</span></div></div>
<div class="r"><div class="c1"><span style="letter-spacing:-1.07px">VEHICLE</span></div><div class="c2 l"><span style="letter-spacing:0.28px">Number</span></div><div class="c3"><span style="letter-spacing:-0.75px">PERMUTATIONS</span></div></div>
<div class="r"><div class="c1"><span style="letter-spacing:-1.0px">BEARDY BOB</span></div><div class="c2"><span style="letter-spacing:0.03px">20</span></div><div class="c3"></div></div>
<div class="r"><div class="c1"><span style="letter-spacing:-0.78px">HEAVY GUNSHIP</span></div><div class="c2"><span style="letter-spacing:0.03px">2</span></div><div class="c3"></div></div>
<div class="r"><div class="c1"><span style="letter-spacing:-0.89px">WEAVER</span></div><div class="c2"><span style="letter-spacing:0.03px">71</span></div><div class="c3"></div></div>
<div class="r"><div class="c1"><span style="letter-spacing:-1.24px">REAVER</span></div><div class="c2"><span style="letter-spacing:0.03px">18</span></div><div class="c3"></div></div>
<div class="r"><div class="c1"><span style="letter-spacing:-1.12px">TEST PATTERN</span></div><div class="c2"><span style="letter-spacing:0.03px">4</span></div><div class="c3"></div></div>
<div class="r"><div class="c1"><span style="letter-spacing:-0.64px">BROMELIAD</span></div><div class="c2"><span style="letter-spacing:0.04px">272</span></div><div class="c3"></div></div>
<div class="r"><div class="c1"><span style="letter-spacing:-1.11px">SLOWPOKE</span></div><div class="c2"><span style="letter-spacing:0.03px">17</span></div><div class="c3"></div></div>
<div class="r"><div class="c1"><span style="letter-spacing:-0.77px">LUV</span></div><div class="c2"><span style="letter-spacing:0.03px">57</span></div><div class="c3"></div></div>
<div class="r"><div class="c1"><span style="letter-spacing:-1.16px">APC</span></div><div class="c2"><span style="letter-spacing:0.03px">26</span></div><div class="c3"><span style="letter-spacing:-0.56px">3R, 3F</span></div></div>
<div class="r"><div class="c1"><span style="letter-spacing:-0.26px">MBT</span></div><div class="c2"><span style="letter-spacing:0.03px">34</span></div><div class="c3"><span style="letter-spacing:-0.53px">12R</span></div></div>
<div class="r"><div class="c1"><span style="letter-spacing:-0.94px">MLRS</span></div><div class="c2"><span style="letter-spacing:0.03px">17</span></div><div class="c3"></div></div>
<div class="r"><div class="c1"><span style="letter-spacing:-1.1px">SPAAG</span></div><div class="c2"><span style="letter-spacing:0.03px">12</span></div><div class="c3"><span style="letter-spacing:-0.8px">2R</span></div></div>
<div class="r"><div class="c1"><span style="letter-spacing:-1.08px">BRIC</span></div><div class="c2"><span style="letter-spacing:0.03px">61</span></div><div class="c3"><span style="letter-spacing:-0.25px">13(MMAR),29(MMAA),9(AACC),10(CCCC)</span></div></div>
<div class="r"><div class="c1"><span style="letter-spacing:-1.17px">INTERCEPTOR</span></div><div class="c2"><span style="letter-spacing:0.03px">50</span></div><div class="c3"></div></div>
<div class="r"><div class="c1"><span style="letter-spacing:-0.72px">BOMBER</span></div><div class="c2"><span style="letter-spacing:0.03px">7</span></div><div class="c3"><span style="letter-spacing:-0.08px">6 Carpet, 8 FuelBomb, 4 BnkrBstr</span></div></div>
<div class="r"><div class="c1"><span style="letter-spacing:-0.76px">GUNSHIP</span></div><div class="c2"><span style="letter-spacing:0.03px">34</span></div><div class="c3"></div></div>
<div class="r"><div class="c1"><span style="letter-spacing:-0.8px">COMBAT DROPSHIP</span></div><div class="c2"><span style="letter-spacing:0.03px">15</span></div><div class="c3"></div></div>
<div class="r"><div class="c1"><span style="letter-spacing:-1.02px">CARGO DROPSHIP</span></div><div class="c2"><span style="letter-spacing:0.03px">2</span></div><div class="c3"></div></div>
<div class="r"><div class="c1"></div><div class="c2"></div><div class="c3"></div></div>
<div class="r"><div class="c1"><span style="letter-spacing:-0.99px">TOTAL</span></div><div class="c2"><span style="letter-spacing:0.03px">3646</span></div><div class="c3"></div></div>
<div class="r"><div class="c1"><span style="letter-spacing:-0.61px">LIGHT INF</span></div><div class="c2"><span style="letter-spacing:0.03px">1575</span></div><div class="c3"><span style="letter-spacing:0.12px">815(MinStr)101(MaxStr)</span></div></div>
<div class="r"><div class="c1"><span style="letter-spacing:-0.76px">POWER INF</span></div><div class="c2"><span style="letter-spacing:0.03px">1252</span></div><div class="c3"></div></div>
<div class="r"><div class="c1"><span style="letter-spacing:-0.17px">COMMANDO</span></div><div class="c2"><span style="letter-spacing:0.03px">16</span></div><div class="c3"><span style="letter-spacing:0.05px">16(MaxStr)</span></div></div>
<div class="r"><div class="c1"><span style="letter-spacing:-1.16px">CREW</span></div><div class="c2"><span style="letter-spacing:0.04px">803</span></div><div class="c3"></div></div>
<div class="r"><div class="c1"><span style="letter-spacing:-1.04px">CREW NEEDED</span></div><div class="c2"><span style="letter-spacing:0.04px">519</span></div><div class="c3"></div></div>
<div class="r"><div class="c1"></div><div class="c2"></div><div class="c3"></div></div>
<div class="r"><div class="c1"><span style="letter-spacing:-0.97px">CRUISE MISSILE</span></div><div class="c2"><span style="letter-spacing:0.03px">10</span></div><div class="c3"></div></div>
<div class="r"><div class="c1"><span style="letter-spacing:-0.79px">NUKE MISSILE</span></div><div class="c2"><span style="letter-spacing:0.03px">3</span></div><div class="c3"></div></div>
<div class="r"><div class="c1"><span style="letter-spacing:-0.52px">NUKE BOMB</span></div><div class="c2"><span style="letter-spacing:0.03px">7</span></div><div class="c3"></div></div>
<div class="r"><div class="c1"><span style="letter-spacing:-0.4px">INSTANT COMM</span></div><div class="c2"><span style="letter-spacing:0.03px">4</span></div><div class="c3"></div></div>
<div class="r"><div class="c1"><span style="letter-spacing:-1.19px">BLASTER RIFLE</span></div><div class="c2"><span style="letter-spacing:0.36px">211</span></div><div class="c3"></div></div>
<div class="r"><div class="c1"><span style="letter-spacing:-1.4px">SEEKER BLASTER</span></div><div class="c2"><span style="letter-spacing:0.03px">65</span></div><div class="c3"></div></div>
<div class="r"><div class="c1"><span style="letter-spacing:-1.19px">FREQUENCY BLASTER</span></div><div class="c2"><span style="letter-spacing:0.03px">12</span></div><div class="c3"></div></div>
<div class="r"><div class="c1"><span style="letter-spacing:-1.06px">SEEKER CANNON</span></div><div class="c2"><span style="letter-spacing:0.03px">15</span></div><div class="c3"></div></div>
<div class="r"><div class="c1"><span style="letter-spacing:-1.19px">LONGRANGE SEEKER</span></div><div class="c2"><span style="letter-spacing:0.03px">10</span></div><div class="c3"></div></div>
<div class="r"><div class="c1"><span style="letter-spacing:-1.05px">FUSION CASTER</span></div><div class="c2"><span style="letter-spacing:0.03px">18</span></div><div class="c3"></div></div>
<div class="r"><div class="c1"><span style="letter-spacing:-1.32px">FORGE CASTER</span></div><div class="c2"><span style="letter-spacing:0.03px">10</span></div><div class="c3"></div></div>
<div class="r"><div class="c1"><span style="letter-spacing:-0.79px">PRIMARY MELEE</span></div><div class="c2"><span style="letter-spacing:0.04px">600</span></div><div class="c3"></div></div>
<div class="r"><div class="c1"><span style="letter-spacing:-1.09px">SECONDARY MELEE</span></div><div class="c2"><span style="letter-spacing:0.03px">1200</span></div><div class="c3"></div></div>
</div>
</body>
</html>
